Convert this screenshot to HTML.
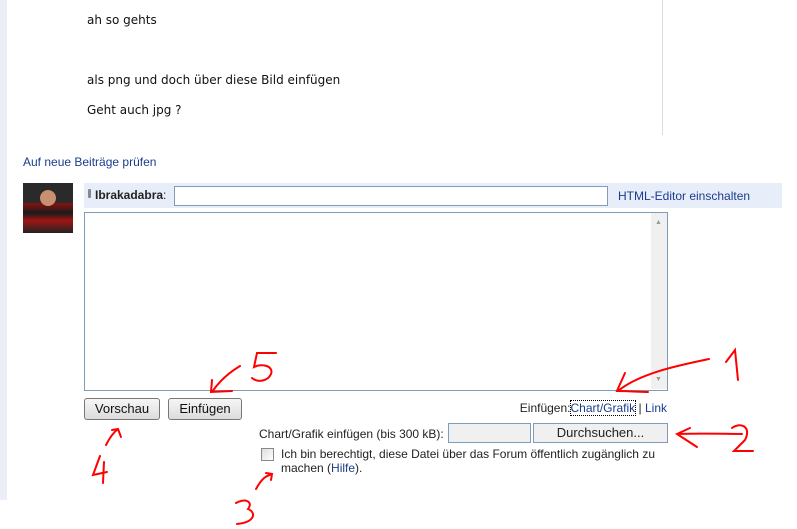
<!DOCTYPE html>
<html><head><meta charset="utf-8"><style>
body{margin:0;width:797px;height:529px;background:#fff;position:relative;overflow:hidden;font-family:"Liberation Sans",sans-serif;font-size:12px;color:#222}
.a{position:absolute}
.post{font-family:"DejaVu Sans",sans-serif;font-size:12px;color:#111}
.btn{position:absolute;height:20px;border:1px solid #777;border-radius:3px;background:linear-gradient(#f6f6f6,#dcdcdc);font-size:13px;text-align:center;line-height:20px;color:#111}
a{color:#1a3c8c;text-decoration:none}
</style></head><body>
<div class="a" style="left:0;top:0;width:7px;height:500px;background:#e9eef7"></div>
<div class="a" style="left:662px;top:0;width:1px;height:135px;background:#ddd"></div>
<div class="a post" style="left:87px;top:13px">ah so gehts</div>
<div class="a post" style="left:87px;top:73px">als png und doch über diese Bild einfügen</div>
<div class="a post" style="left:87px;top:103px">Geht auch jpg ?</div>
<div class="a" style="left:23px;top:155px;color:#1a3c8c">Auf neue Beiträge prüfen</div>
<div class="a" style="left:23px;top:183px;width:50px;height:50px;background:radial-gradient(circle at 50% 30%,#c89070 0 18%,transparent 19%),linear-gradient(#2a2a2a 40%,#8a1010 40%,#1a1a1a 60%,#a01515 75%,#222);"></div>
<div class="a" style="left:84px;top:183px;width:698px;height:25px;background:#e8eef9"></div>
<div class="a" style="left:88px;top:189px;width:3px;height:9px;background:#888;border-radius:1px"></div>
<div class="a" style="left:95px;top:188px;font-weight:bold">Ibrakadabra<span style="font-weight:normal">:</span></div>
<div class="a" style="left:174px;top:186px;width:432px;height:18px;border:1px solid #7f9db9;background:#fff"></div>
<div class="a" style="left:618px;top:189px;color:#1a3c8c">HTML-Editor einschalten</div>
<div class="a" style="left:84px;top:212px;width:582px;height:177px;border:1px solid #7f9db9;background:#fff"></div>
<div class="a" style="left:651px;top:213px;width:16px;height:176px;background:#f0f0f0"></div>
<div class="a" style="left:655px;top:219px;font-size:7px;color:#999">▲</div>
<div class="a" style="left:655px;top:376px;font-size:7px;color:#999">▼</div>
<div class="btn" style="left:84px;top:398px;width:74px">Vorschau</div>
<div class="btn" style="left:168px;top:398px;width:72px">Einfügen</div>
<div class="a" style="left:513px;top:401px;width:154px;text-align:right;white-space:nowrap">Einfügen:<a style="outline:1px dotted #000">Chart/Grafik</a> | <a>Link</a></div>
<div class="a" style="left:259px;top:427px">Chart/Grafik einfügen (bis 300 kB):</div>
<div class="a" style="left:448px;top:423px;width:81px;height:18px;border:1px solid #7f9db9;background:#f0f0f0"></div>
<div class="a" style="left:533px;top:423px;width:133px;height:18px;border:1px solid #7f9db9;background:#f0f0f0;text-align:center;line-height:18px;font-size:13px">Durchsuchen...</div>
<div class="a" style="left:261px;top:448px;width:11px;height:11px;border:1px solid #888;background:linear-gradient(135deg,#ddd,#fff)"></div>
<div class="a" style="left:281px;top:447px;width:380px;line-height:14px">Ich bin berechtigt, diese Datei über das Forum öffentlich zugänglich zu machen (<a>Hilfe</a>).</div>
<svg class="a" style="left:0;top:0" width="797" height="529" fill="none" stroke="#f00" stroke-width="2" stroke-linecap="round">
<path d="M709 359C680 365 640 373 618 391M625 373C622 380 619 386 617 391C630 391 640 392 648 392"/>
<path d="M726 362L735 350L738 380"/>
<path d="M742 434C725 434 705 433 677 434M690 428L677 434L697 447"/>
<path d="M732 428C740 422 752 426 745 440L734 451L753 451"/>
<path d="M240 366C230 372 220 380 212 392M212 380L211 392L232 391"/>
<path d="M276 353L257 353L254 367C262 363 274 366 271 374C268 381 258 383 252 378"/>
<path d="M106 445C110 437 114 432 118 429M112 430L118 429L121 437"/>
<path d="M100 456L93 475L107 472M104 462L103 483"/>
<path d="M256 489C262 478 266 476 272 474M266 473L272 474L271 480"/>
<path d="M236 503C244 498 254 501 248 509C256 512 256 522 237 524"/>
</svg>
</body></html>
